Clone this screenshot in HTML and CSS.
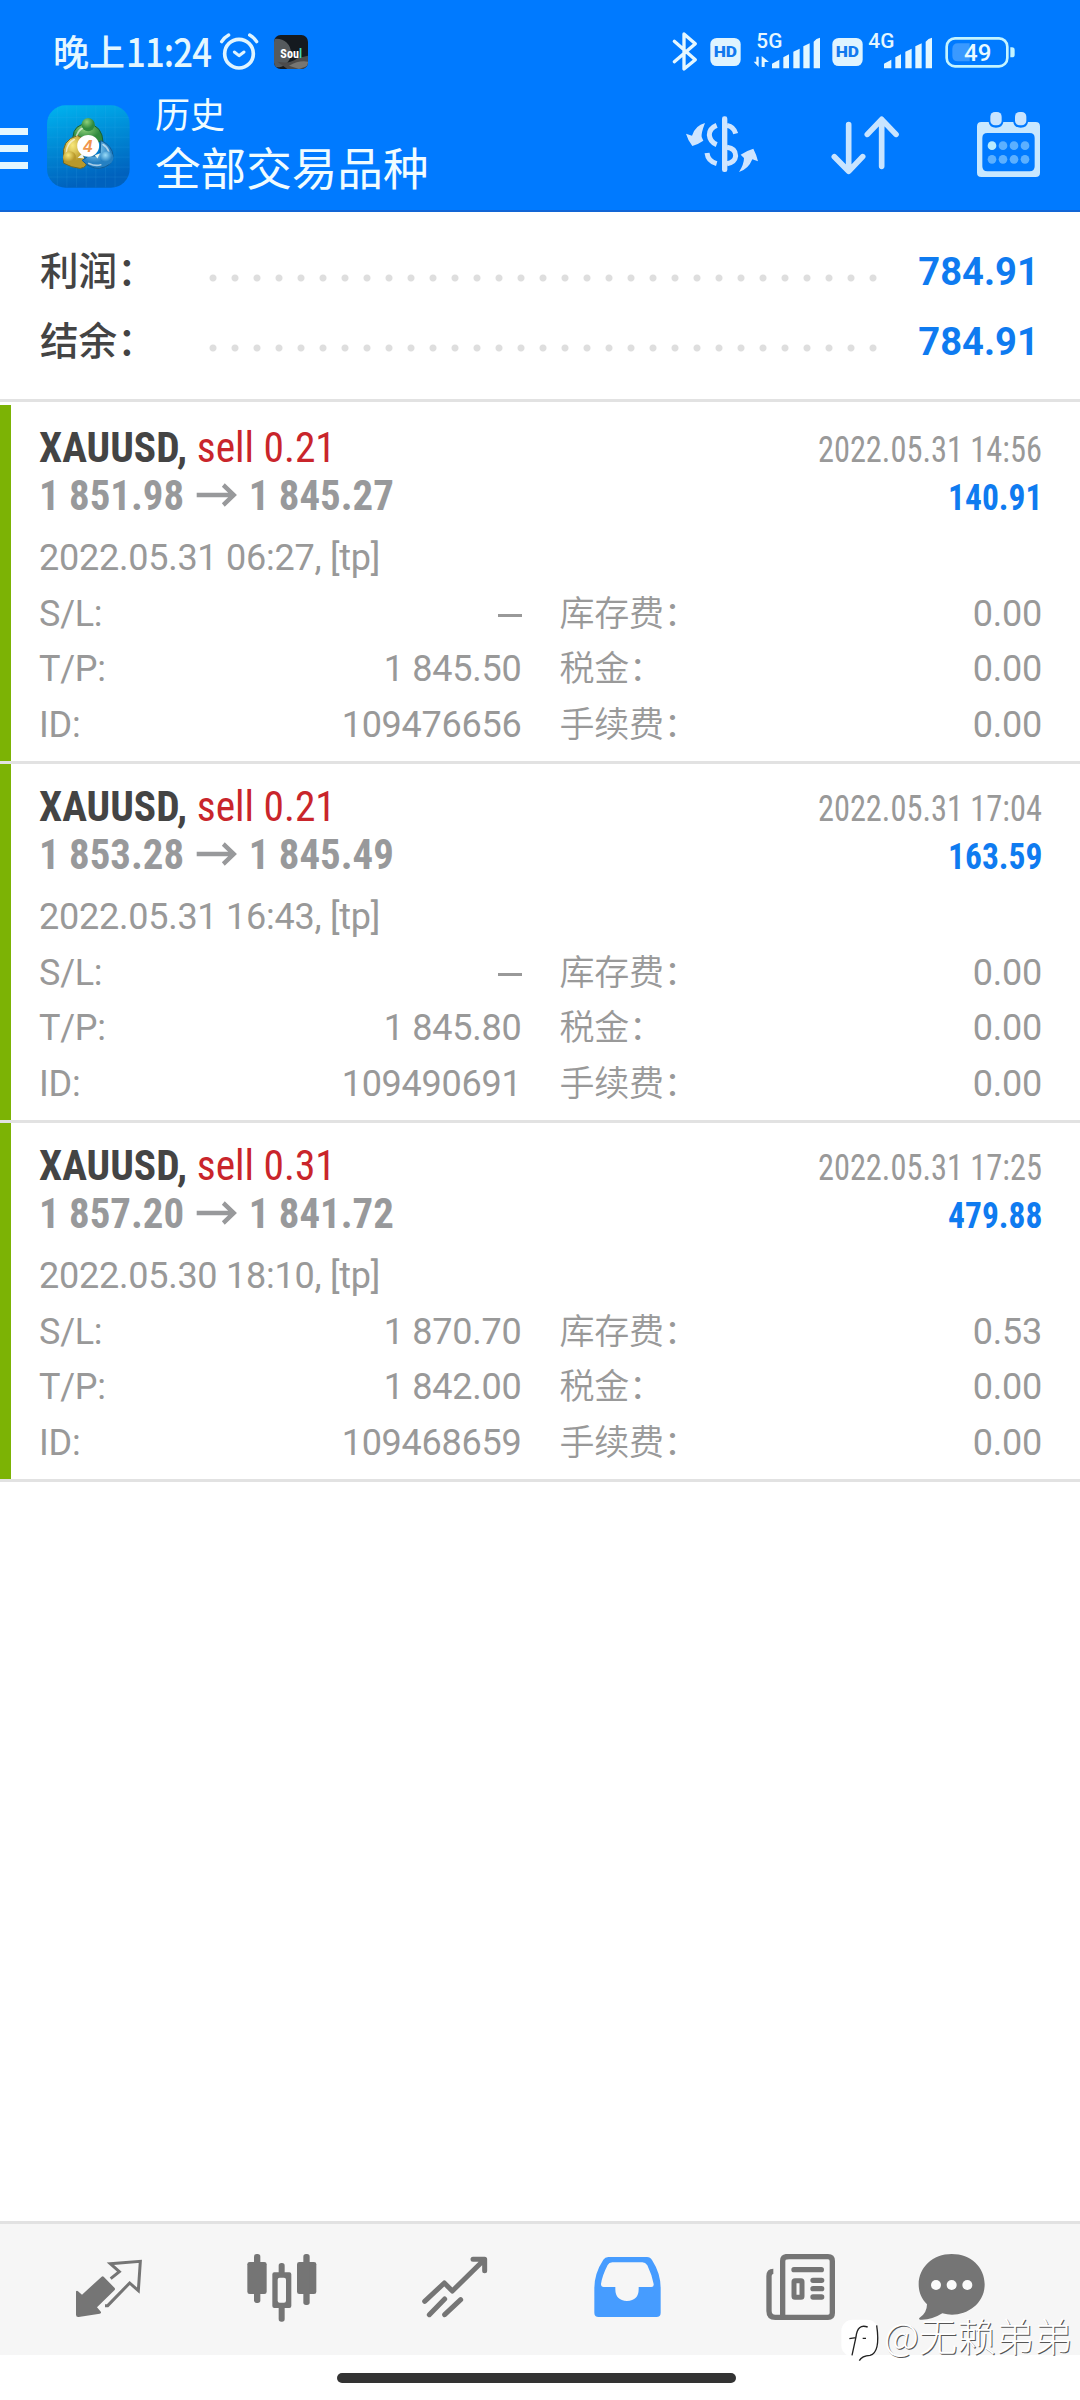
FILE: index.html
```html
<!DOCTYPE html>
<html lang="zh-CN">
<head>
<meta charset="utf-8">
<title>历史</title>
<link rel="stylesheet" href="styles.css">
</head>
<body>
<div class="screen">
  <header class="header">
    <div class="status">
      <div class="status-left">
        <span class="time-cn">晚上</span><span class="time">11:24</span>
        <svg class="alarm" width="40" height="40" viewBox="658 36 120 120" fill="none" stroke="#dff4ff" stroke-linecap="round">
          <circle cx="718" cy="101" r="43" stroke-width="11"/>
          <path d="M704 96l14 11 15-11" stroke-width="9" stroke-linejoin="round"/>
          <path d="M666 65q8-13 21-20M771 65q-8-13-21-20" stroke-width="10"/>
        </svg>
        <svg class="soul" width="34" height="34" viewBox="0 0 102 102">
          <defs><clipPath id="sc"><rect width="102" height="102" rx="20"/></clipPath></defs>
          <g clip-path="url(#sc)">
            <rect width="102" height="102" fill="#151a1f"/>
            <circle cx="8" cy="54" r="43" fill="#555a5d"/>
            <path d="M10 80Q50 88 70 70L102 62V102H40Z" fill="#4c4b4b"/>
            <path d="M45 92Q75 75 102 80V92L75 102Z" fill="#777673"/>
          </g>
          <text x="19" y="69" class="soul-text" textLength="65" lengthAdjust="spacingAndGlyphs">Sou<tspan fill="#43d9b4">l</tspan></text>
        </svg>
      </div>
      <div class="status-right">
        <svg width="24" height="40" viewBox="99 96 72 120" fill="none" stroke="#e4f7ff" stroke-width="10" stroke-linejoin="round" stroke-linecap="round"><path d="M103 124L166 179 132 207V102L166 131 103 185"/></svg>
        <svg class="hd" width="31" height="30" viewBox="0 0 93 90"><rect x="1" y="3" width="91" height="84" rx="19" fill="#dff4ff"/><text x="46" y="61" class="hd-text" text-anchor="middle" textLength="70" lengthAdjust="spacingAndGlyphs">HD</text></svg>
        <svg class="sig" width="66" height="40" viewBox="342 95 198 120" fill="#e4f7ff">
          <text x="349" y="143" class="net" textLength="78" lengthAdjust="spacingAndGlyphs">5G</text>
          <path d="M349 169h7v31l-15-16h8zM365 200v-33l22 18h-13v15zM396 204v-14l22-12v26zM430 204v-33l17-9v42zM460 204v-50l19-9v59zM490 204v-66l19-9v75zM521 204v-80q8-10 19-12v92z"/>
        </svg>
        <svg class="hd2" width="31" height="30" viewBox="0 0 93 90"><rect x="1" y="3" width="91" height="84" rx="19" fill="#dff4ff"/><text x="46" y="61" class="hd-text" text-anchor="middle" textLength="70" lengthAdjust="spacingAndGlyphs">HD</text></svg>
        <svg class="sig2" width="65" height="40" viewBox="684 95 195 120" fill="#e4f7ff">
          <text x="685" y="143" class="net" textLength="78" lengthAdjust="spacingAndGlyphs">4G</text>
          <path d="M732 204v-14l22-12v26zM766 204v-33l17-9v42zM796 204v-50l19-9v59zM826 204v-66l19-9v75zM857 204v-80q8-10 19-12v92z"/>
        </svg>
        <svg class="battery" width="70" height="32" viewBox="916 107 210 96">
          <rect x="921" y="114" width="182" height="84" rx="25" fill="none" stroke="#c4f4ff" stroke-width="8"/>
          <path d="M955 129h35v54h-35q-17 0-17-17v-20q0-17 17-17z" fill="#3a99ff"/>
          <path d="M1112 141h5q8 0 8 8v14q0 8-8 8h-5z" fill="#c4f4ff"/>
          <text x="1014" y="183" class="batt-text" text-anchor="middle" textLength="82" lengthAdjust="spacingAndGlyphs">49</text>
        </svg>
      </div>
    </div>
    <div class="toolbar">
      <div class="menu"><i></i><i></i><i></i></div>
      <svg class="logo" width="83" height="83" viewBox="140 253 250 250">
        <defs>
          <linearGradient id="lb" x1="0" y1="0" x2=".25" y2="1"><stop offset="0" stop-color="#00b4f0"/><stop offset=".5" stop-color="#008bd6"/><stop offset="1" stop-color="#0061bd"/></linearGradient>
          <radialGradient id="lg" cx=".4" cy=".3"><stop offset="0" stop-color="#8fd07a"/><stop offset="1" stop-color="#2f8a3e"/></radialGradient>
          <radialGradient id="ly" cx=".4" cy=".3"><stop offset="0" stop-color="#f8e87a"/><stop offset="1" stop-color="#b8982a"/></radialGradient>
          <radialGradient id="lu" cx=".4" cy=".3"><stop offset="0" stop-color="#9adcf8"/><stop offset="1" stop-color="#2580c2"/></radialGradient>
        </defs>
        <rect x="140" y="254" width="249" height="248" rx="56" fill="url(#lb)"/>
        <path d="M171 258V498M200 255V501M229 255V501M258 255V501M287 255V501M316 255V501M345 255V501M142 290H388M141 320H389M141 350H389M141 380H389M141 410H389M141 440H389M142 470H388" stroke="#42bdf0" stroke-opacity=".2" fill="none" stroke-width="2"/>
        <path d="M218 366V350Q220 311 263 309Q307 315 309 366L288 362Q282 348 263 346Q244 348 240 364Z" fill="url(#lg)" stroke="#155e36" stroke-width="3"/>
        <path d="M190 412Q182 358 232 345L244 352Q224 380 258 420Q264 440 240 444Q214 442 190 428Z" fill="url(#ly)" stroke="#6c6524" stroke-width="3"/>
        <path d="M246 420Q270 445 298 444Q337 438 339 407Q338 376 302 360L300 398Q286 412 268 404Z" fill="url(#lu)" stroke="#115b94" stroke-width="3"/>
        <path d="M229 345Q238 320 262 319M198 398Q199 368 222 357M266 429Q286 438 302 433M326 393Q322 380 309 372" fill="none" stroke="#fff" stroke-opacity=".6" stroke-width="5" stroke-linecap="round"/>
        <path d="M232 412L246 400L252 414ZM284 404L300 398L292 414Z" fill="#eef6ee"/>
        <circle cx="264" cy="312" r="20" fill="url(#lg)"/><circle cx="208" cy="412" r="20" fill="url(#ly)"/><circle cx="320" cy="412" r="20" fill="url(#lu)"/>
        <circle cx="264" cy="376" r="33" fill="#fff"/>
        <text x="263" y="394" class="logo-text" text-anchor="middle">4</text>
      </svg>
      <div class="titles"><div class="subtitle">历史</div><h1 class="title">全部交易品种</h1></div>
      <div class="actions">
        <svg width="75" height="68" viewBox="135 336 225 204" fill="#cfe5ff">
          <path d="M195 369Q183 400 185 411L190 422Q176 432 157 438Q144 422 138 401L156 407Q166 376 195 369ZM297 516Q312 493 312 474L302 464Q322 451 340 446Q350 465 354 484L337 478Q325 508 297 516Z"/>
          <path d="M230 376Q208 385 208 405Q210 426 230 434M201 459Q204 484 230 491M261 376Q282 380 287 401M261 442Q287 445 287 468Q285 487 261 491" fill="none" stroke="#cfe5ff" stroke-width="15"/>
          <rect x="246" y="349" width="16" height="167" rx="7"/>
        </svg>
        <svg class="sort" width="70" height="68" viewBox="570 336 210 204" fill="none" stroke="#c8e4ff" stroke-width="17" stroke-linecap="round" stroke-linejoin="round"><path d="M626 374V513M583 470L626 514 668 470M725 499V359M682 403L725 358 768 403"/></svg>
        <svg class="cal" width="65" height="68" viewBox="1008 336 195 204">
          <path d="M1024 366H1046Q1048 383 1068 383Q1088 383 1090 366H1120Q1122 383 1142 383Q1162 383 1164 366H1187Q1200 366 1200 379V518Q1200 531 1187 531H1024Q1011 531 1011 518V379Q1011 366 1024 366ZM1042 399Q1027 399 1027 414V499Q1027 514 1042 514H1169Q1184 514 1184 499V414Q1184 399 1169 399Z" fill="#c8e8ff" fill-rule="evenodd"/>
          <rect x="1051" y="336" width="34" height="40" rx="14" fill="#c8e4ff"/><rect x="1125" y="336" width="34" height="40" rx="14" fill="#c8e4ff"/>
          <circle cx="1056" cy="437" r="13" fill="#b8ecff"/>
          <g fill="#5cb0ff"><circle cx="1089" cy="437" r="13"/><circle cx="1122" cy="437" r="13"/><circle cx="1155" cy="437" r="13"/><circle cx="1056" cy="478" r="13"/><circle cx="1089" cy="478" r="13"/><circle cx="1122" cy="478" r="13"/><circle cx="1155" cy="478" r="13"/></g>
        </svg>
      </div>
    </div>
  </header>

  <section class="summary">
    <div class="sum-row"><span class="sum-label">利润：</span><span class="dots"></span><span class="sum-value">784.91</span></div>
    <div class="sum-row"><span class="sum-label">结余：</span><span class="dots"></span><span class="sum-value">784.91</span></div>
  </section>

  <main class="deals">
    <article class="deal">
      <div class="line"><div class="order"><b class="symbol">XAUUSD,</b> <span class="sell">sell 0.21</span></div><span class="closed">2022.05.31 14:56</span></div>
      <div class="line"><div class="prices"><span>1 851.98</span><svg width="42" height="24" viewBox="0 0 42 24"><path d="M0 12H39M28 2L39 12 28 22"/></svg><span>1 845.27</span></div><span class="profit">140.91</span></div>
      <div class="details">
        <div class="opened">2022.05.31 06:27, [tp]</div>
        <div class="cell"><span>S/L:</span><span class="dash"></span></div><div class="cell"><span class="cn">库存费：</span><span>0.00</span></div>
        <div class="cell"><span>T/P:</span><span>1 845.50</span></div><div class="cell"><span class="cn">税金：</span><span>0.00</span></div>
        <div class="cell"><span>ID:</span><span>109476656</span></div><div class="cell"><span class="cn">手续费：</span><span>0.00</span></div>
      </div>
    </article>
    <article class="deal">
      <div class="line"><div class="order"><b class="symbol">XAUUSD,</b> <span class="sell">sell 0.21</span></div><span class="closed">2022.05.31 17:04</span></div>
      <div class="line"><div class="prices"><span>1 853.28</span><svg width="42" height="24" viewBox="0 0 42 24"><path d="M0 12H39M28 2L39 12 28 22"/></svg><span>1 845.49</span></div><span class="profit">163.59</span></div>
      <div class="details">
        <div class="opened">2022.05.31 16:43, [tp]</div>
        <div class="cell"><span>S/L:</span><span class="dash"></span></div><div class="cell"><span class="cn">库存费：</span><span>0.00</span></div>
        <div class="cell"><span>T/P:</span><span>1 845.80</span></div><div class="cell"><span class="cn">税金：</span><span>0.00</span></div>
        <div class="cell"><span>ID:</span><span>109490691</span></div><div class="cell"><span class="cn">手续费：</span><span>0.00</span></div>
      </div>
    </article>
    <article class="deal">
      <div class="line"><div class="order"><b class="symbol">XAUUSD,</b> <span class="sell">sell 0.31</span></div><span class="closed">2022.05.31 17:25</span></div>
      <div class="line"><div class="prices"><span>1 857.20</span><svg width="42" height="24" viewBox="0 0 42 24"><path d="M0 12H39M28 2L39 12 28 22"/></svg><span>1 841.72</span></div><span class="profit">479.88</span></div>
      <div class="details">
        <div class="opened">2022.05.30 18:10, [tp]</div>
        <div class="cell"><span>S/L:</span><span>1 870.70</span></div><div class="cell"><span class="cn">库存费：</span><span>0.53</span></div>
        <div class="cell"><span>T/P:</span><span>1 842.00</span></div><div class="cell"><span class="cn">税金：</span><span>0.00</span></div>
        <div class="cell"><span>ID:</span><span>109468659</span></div><div class="cell"><span class="cn">手续费：</span><span>0.00</span></div>
      </div>
    </article>
  </main>

  <nav class="tabs">
    <svg viewBox="33 30 225 225" fill="#757575"><path d="M125 110q3-3 6 0L164 144q2 3 0 6L111 202 123 216q1 5-4 5L56 231q-8 1-8-7V154q3-3 6 0L66 164Z"/><path d="M152 116L178 95 151 71 241 64 235 152 209 129 143 197H135" fill="none" stroke="#757575" stroke-width="9"/></svg>
    <svg viewBox="550 30 225 225" fill="#757575"><rect x="560" y="66" width="58" height="96" rx="7"/><rect x="580" y="42" width="19" height="147" rx="8"/><rect x="709" y="66" width="58" height="96" rx="7"/><rect x="728" y="42" width="19" height="153" rx="8"/><rect x="654" y="69" width="18" height="40" rx="8"/><rect x="654" y="190" width="18" height="55" rx="8"/><path d="M641 97H686q6 0 6 6V198q0 6-6 6H641q-6 0-6-6V103q0-6 6-6ZM657 113q-6 0-6 6V182q0 6 6 6H670q6 0 6-6V119q0-6-6-6Z" fill-rule="evenodd"/></svg>
    <svg viewBox="1070 30 225 225" fill="none" stroke="#757575" stroke-width="15" stroke-linecap="round" stroke-linejoin="round"><path d="M1093 184L1152 129 1176 153 1270 61M1238 58H1273V92M1107 224L1153 177M1153 224L1201 179"/></svg>
    <svg viewBox="30 30 225 225"><path d="M85 51H201Q211 51 216 60Q242 100 242 145V218Q242 231 229 231H56Q43 231 43 218V145Q43 100 70 59Q75 51 85 51ZM97 67Q87 67 83 75Q66 108 63 132Q63 141 71 141H106V148Q106 182 141 183Q176 182 176 148V141H214Q222 141 221 132Q216 105 202 76Q196 67 187 67Z" fill="#469cff" fill-rule="evenodd"/></svg>
    <svg viewBox="550 30 225 225" fill="none" stroke="#757575" stroke-width="16" stroke-linecap="round"><path d="M617 50H745Q758 50 758 63V219Q758 232 745 232H587Q568 232 568 213V108Q568 94 581 94" stroke-linecap="butt"/><path d="M609 226V63Q609 50 622 50M643 89H725M700 121H726M700 146H726M700 171H726"/><rect x="643" y="122" width="24" height="50" rx="3" stroke-width="15"/></svg>
    <svg class="chat" viewBox="1006 30 225 225"><path d="M1119 42C1177 42 1218 82 1218 133C1218 190 1168 224 1120 224Q1106 224 1091 220Q1058 241 1024 239Q1020 237 1022 234Q1045 220 1045 193C1028 176 1020 156 1020 133C1020 82 1063 42 1119 42Z" fill="#757575"/><g fill="#fafafa"><circle cx="1072" cy="135" r="15"/><circle cx="1119" cy="135" r="15"/><circle cx="1166" cy="135" r="15"/></g></svg>
  </nav>
  <div class="gesture"><span class="pill"></span></div>
  <div class="watermark">
    <svg width="40" height="46" viewBox="60 58 120 138"><rect x="64" y="63" width="111" height="111" rx="34" fill="#fff"/><path d="M143 85Q112 74 108 115L96 170M88 120l20-3M128 119h10M170 80Q182 162 150 170Q126 171 118 186" fill="none" stroke="#222" stroke-width="4"/></svg>
    <span>@无赖弟弟</span>
  </div>
</div>
</body>
</html>
```
FILE: styles.css
```css
* { box-sizing: border-box; }
body { margin: 0; background: #fff; font-family: Roboto, "Noto Sans CJK SC", sans-serif; }
svg { display: block; flex: none; overflow: visible; }
.screen { position: relative; width: 1080px; height: 2400px; display: flex; flex-direction: column; }

.header { height: 212px; background: #007aff; border-bottom: 2px solid #1266d6; flex: none; }
.status { height: 104px; display: flex; justify-content: space-between; align-items: center; padding: 0 65px 0 53px; color: #e4f7ff; }
.status-left, .status-right { display: flex; align-items: center; }
.time-cn { font: 500 36px/44px "Noto Sans CJK SC", sans-serif; width: 73px; margin-top: -4px; }
.time { font: 500 39px/44px "Noto Sans CJK SC", sans-serif; width: 87px; letter-spacing: -1px; margin-top: -5px; white-space: nowrap; transform: scaleX(.89); transform-origin: left; }
.alarm { margin-left: 6px; margin-top: -1px; }
.soul { margin-left: 15px; }
.soul-text { font: 700 38px "Roboto Condensed", sans-serif; fill: #fff; }
.hd { margin-left: 13px; }
.hd-text { font: 900 44px Roboto, sans-serif; fill: #1279ee; }
.sig { margin-left: 13px; }
.net { font: 500 59px Roboto, sans-serif; }
.hd2 { margin-left: 12px; }
.sig2 { margin-left: 5px; }
.battery { margin-left: 12px; }
.batt-text { font: 500 70px Roboto, sans-serif; fill: #e8faff; }

.toolbar { display: flex; align-items: flex-start; height: 106px; padding-right: 39px; }
.menu { width: 28px; padding-top: 24px; display: flex; flex-direction: column; gap: 10px; margin-right: 19px; }
.menu i { height: 7px; background: #e4f7ff; }
.logo { margin-top: 1px; }
.logo-text { font: italic 700 50px "Liberation Sans", sans-serif; fill: #f0954d; }
.titles { margin-left: 25px; color: #f0fcff; font-family: "Noto Sans CJK SC", sans-serif; }
.subtitle { font-size: 35px; line-height: 42px; margin-top: -12px; }
.title { margin: 4px 0 0; font-size: 45.6px; line-height: 56px; font-weight: 400; }
.actions { margin: 8px 0 0 auto; display: flex; }
.sort { margin-left: 70px; }
.cal { margin-left: 76px; }

.summary { height: 190px; flex: none; padding: 24px 41px 0 40px; border-bottom: 3px solid #e2e2e2; }
.sum-row { display: flex; height: 70px; }
.sum-label { width: 162px; font: 500 38.6px/65px "Noto Sans CJK SC", sans-serif; color: #444; }
.dots { width: 682px; height: 8px; margin-top: 38px; background: radial-gradient(circle, #dedede 3px, transparent 4px) 0 0 / 22px 8px; }
.sum-value { margin-left: auto; font-size: 39.5px; line-height: 72px; font-weight: 700; color: #0f7bf0; white-space: nowrap; transform: scaleX(.965); transform-origin: right; }

.deals { flex: 1; padding-top: 3px; }
.deal { height: 359px; padding: 18px 38px 0 28px; border-left: 11px solid #7cb305; position: relative; }
.deal::after { content: ""; position: absolute; left: -11px; right: 0; bottom: 0; height: 3px; background: #e2e2e2; }
.line { display: flex; justify-content: space-between; align-items: baseline; height: 48px; line-height: 48px; font-family: "Roboto Condensed", sans-serif; font-size: 43px; white-space: nowrap; }
.order { transform: scaleX(.963); transform-origin: left; }
.symbol { color: #444; }
.sell { color: #c9252b; }
.closed { font-size: 36px; color: #999; transform: scaleX(.9); transform-origin: right; }
.prices { display: flex; align-items: baseline; color: #98999b; font-weight: 700; transform: scaleX(.95); transform-origin: left; }
.prices svg { margin: 0 13px; align-self: center; fill: none; stroke: #98999b; stroke-width: 4.5; }
.profit { font-size: 36px; font-weight: 700; color: #0f7bf0; transform: scaleX(.93); transform-origin: right; }
.details { margin-top: 12px; display: grid; grid-template-columns: 1fr 1fr; grid-auto-rows: 55.5px; column-gap: 38px; font-size: 36px; line-height: 55.5px; letter-spacing: -.25px; color: #999; }
.opened { grid-column: 1 / 3; }
.cell { display: flex; justify-content: space-between; }
.cn { font-family: "Noto Sans CJK SC", sans-serif; font-weight: 350; font-size: 35px; line-height: 48px; }
.dash { width: 24px; height: 3px; margin-top: 27px; background: #999; }

.tabs { height: 134px; flex: none; display: flex; gap: 97.9px; padding: 26px 0 0 71px; background: #f6f6f6; border-top: 3px solid #e2e2e2; }
.tabs svg { width: 75px; height: 75px; }
.tabs .chat { margin-left: -21px; }
.gesture { height: 45px; flex: none; display: flex; justify-content: center; padding: 18px 8px 0 0; background: #fff; }
.pill { width: 399px; height: 10px; border-radius: 5px; background: #333; }
.watermark { position: absolute; left: 840px; top: 2318px; display: flex; font: 300 38.4px/40px "Noto Sans CJK SC", sans-serif; color: #fff; text-shadow: 1px 1px 0 #555; white-space: nowrap; }
.watermark span { margin: -4px 0 0 4px; }
```
